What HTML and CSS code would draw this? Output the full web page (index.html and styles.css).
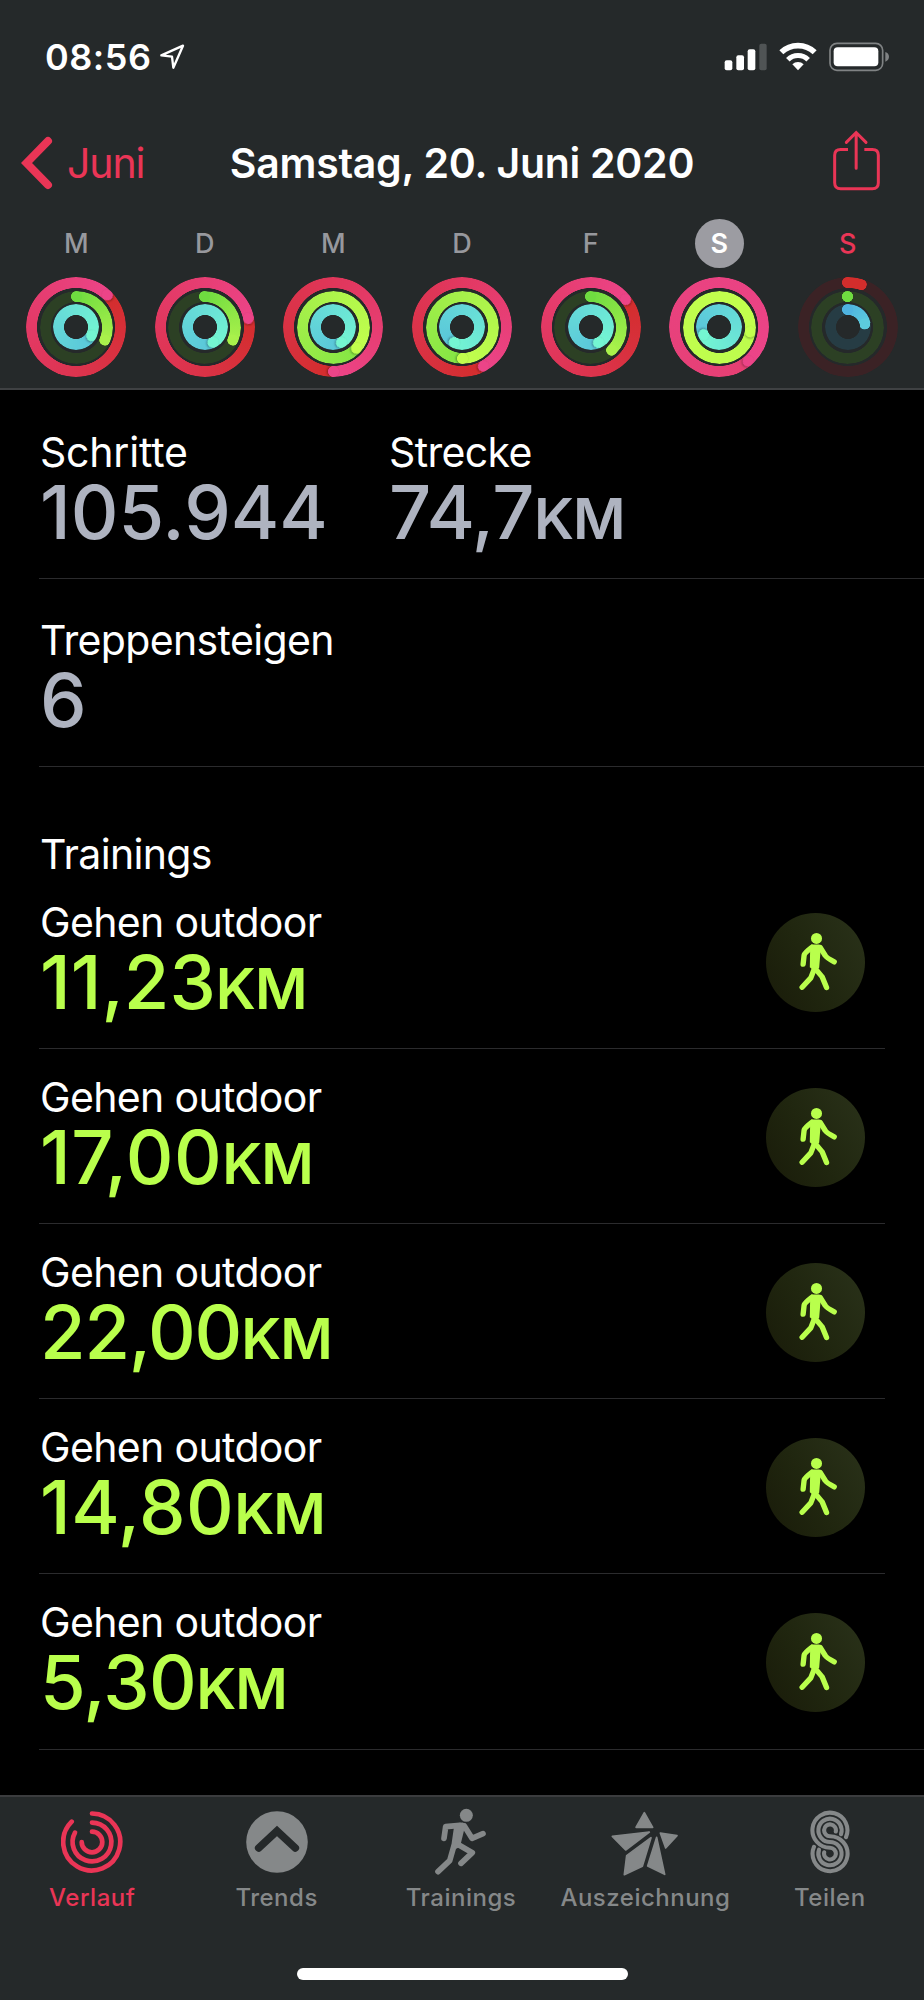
FILE: index.html
```html
<!DOCTYPE html>
<html lang="de">
<head>
    <meta charset="UTF-8">
    <meta name="viewport" content="width=device-width, initial-scale=1.0">
    <title>Aktivität</title>
    <link rel="stylesheet" href="styles.css">
</head>
<body>
    <!-- shared symbols -->
    <svg class="symbols" width="0" height="0">
        <symbol id="walker" viewBox="79 68 296 296">
            <circle cx="230" cy="144" r="16.500" fill="currentColor"/>
            <g fill="none" stroke="currentColor" stroke-width="16" stroke-linecap="round" stroke-linejoin="round">
                <path d="M190 221 L193 194 Q195 187 216 171"/>
                <path d="M241 171 L256 195 Q260 202 283 214"/>
                <path d="M229 238 L247 259 L260 291"/>
                <path d="M223 236 L213 262 L187 290"/>
            </g>
            <path d="M214 162 H239 Q244 165 243 172 L238 232 Q226 247 210 230 L211 172 Z" fill="currentColor"/>
        </symbol>
    </svg>

    <header class="header">
        <div class="status">
            <div class="status-left">
                <span class="time">08:56</span>
                <svg width="27" height="28" viewBox="479 128 81 84" fill="none" stroke="#fff" stroke-width="7" stroke-linejoin="round">
                    <path d="M486 165 L551 136 L522 202 L518 169 Z"/>
                </svg>
            </div>
            <svg class="status-icons" width="166" height="30" viewBox="785 125 498 90">
                <g fill="#fff">
                    <rect x="787" y="180" width="23" height="30" rx="6"/>
                    <rect x="822" y="165" width="23" height="45" rx="6"/>
                    <rect x="856" y="147" width="23" height="63" rx="6"/>
                    <rect x="891" y="130" width="22" height="80" rx="6" fill="#505455"/>
                    <path d="M1007 210 L990 192 A24 24 0 0 1 1024 192 Z"/>
                </g>
                <g fill="none" stroke="#fff">
                    <path d="M957 156 A72 72 0 0 1 1057 156" stroke-width="17"/>
                    <path d="M976.500 178 A43 43 0 0 1 1037.500 178" stroke-width="15"/>
                </g>
                <rect x="1103" y="129" width="158" height="81" rx="21" fill="none" stroke="#808384" stroke-width="5"/>
                <rect x="1114" y="141" width="134" height="57" rx="12" fill="#fff"/>
                <path d="M1269 155 Q1280 159 1280 169.500 Q1280 180 1269 184 Z" fill="#808384"/>
            </svg>
        </div>

        <nav class="nav">
            <a class="back">
                <svg width="32" height="54" viewBox="0 0 32 54" fill="none" stroke="#ea3556" stroke-width="8" stroke-linecap="round">
                    <path d="M27 5 L5.500 27 L27 49"/>
                </svg>
                <span>Juni</span>
            </a>
            <h1 class="title">Samstag, 20. Juni 2020</h1>
            <svg class="share" width="50" height="62" viewBox="1107 391 150 186" fill="none" stroke="#ea3556" stroke-width="9" stroke-linecap="round">
                <path d="M1158 449.500 H1136 Q1118 449.500 1118 467 V549 Q1118 567 1136 567 H1231 Q1249 567 1249 549 V467 Q1249 449.500 1231 449.500 H1207" stroke-linecap="butt"/>
                <path d="M1182.500 400 V506 M1153 428 L1182.500 398.500 L1212 428"/>
            </svg>
        </nav>

        <div class="week">
            <div class="day">
                <span class="day-name">M</span>
                <div class="rings">
                    <i class="ring move" style="--a: 44deg"></i>
                    <i class="ring exercise open" style="--a: 114deg"></i>
                    <i class="ring stand" style="--a: 120deg"></i>
                </div>
            </div>
            <div class="day">
                <span class="day-name">D</span>
                <div class="rings">
                    <i class="ring move" style="--a: 79deg"></i>
                    <i class="ring exercise open" style="--a: 114deg"></i>
                    <i class="ring stand" style="--a: 151deg"></i>
                </div>
            </div>
            <div class="day">
                <span class="day-name">M</span>
                <div class="rings">
                    <i class="ring move" style="--a: 180deg"></i>
                    <i class="ring exercise" style="--a: 132deg"></i>
                    <i class="ring stand" style="--a: 153deg"></i>
                </div>
            </div>
            <div class="day">
                <span class="day-name">D</span>
                <div class="rings">
                    <i class="ring move" style="--a: 152deg"></i>
                    <i class="ring exercise" style="--a: 180deg"></i>
                    <i class="ring stand" style="--a: 208deg"></i>
                </div>
            </div>
            <div class="day">
                <span class="day-name">F</span>
                <div class="rings">
                    <i class="ring move" style="--a: 52deg"></i>
                    <i class="ring exercise open" style="--a: 137deg"></i>
                    <i class="ring stand" style="--a: 153deg"></i>
                </div>
            </div>
            <div class="day selected">
                <span class="day-name">S</span>
                <div class="rings">
                    <i class="ring move" style="--a: 140deg"></i>
                    <i class="ring exercise" style="--a: 98deg"></i>
                    <i class="ring stand" style="--a: 244deg"></i>
                </div>
            </div>
            <div class="day today">
                <span class="day-name">S</span>
                <div class="rings">
                    <i class="ring move open" style="--a: 18deg"></i>
                    <i class="ring exercise open" style="--a: 0deg"></i>
                    <i class="ring stand open" style="--a: 80deg"></i>
                </div>
            </div>
        </div>
    </header>

    <main class="content">
        <section class="stats">
            <div class="stat">
                <div class="label loose">Schritte</div>
                <div class="value">105.944</div>
            </div>
            <div class="stat">
                <div class="label">Strecke</div>
                <div class="value snug">74,7<span class="unit">KM</span></div>
            </div>
        </section>
        <section class="stats">
            <div class="stat">
                <div class="label">Treppensteigen</div>
                <div class="value">6</div>
            </div>
        </section>

        <h2 class="label heading">Trainings</h2>
        <ul class="workouts">
            <li class="workout">
                <div>
                    <div class="label">Gehen outdoor</div>
                    <div class="value">11,23<span class="unit">KM</span></div>
                </div>
                <svg class="badge"><use href="#walker"/></svg>
            </li>
            <li class="workout">
                <div>
                    <div class="label">Gehen outdoor</div>
                    <div class="value wide">17,00<span class="unit">KM</span></div>
                </div>
                <svg class="badge"><use href="#walker"/></svg>
            </li>
            <li class="workout">
                <div>
                    <div class="label">Gehen outdoor</div>
                    <div class="value tight">22,00<span class="unit">KM</span></div>
                </div>
                <svg class="badge"><use href="#walker"/></svg>
            </li>
            <li class="workout">
                <div>
                    <div class="label">Gehen outdoor</div>
                    <div class="value wide">14,80<span class="unit">KM</span></div>
                </div>
                <svg class="badge"><use href="#walker"/></svg>
            </li>
            <li class="workout">
                <div>
                    <div class="label">Gehen outdoor</div>
                    <div class="value snug">5,30<span class="unit">KM</span></div>
                </div>
                <svg class="badge"><use href="#walker"/></svg>
            </li>
        </ul>
    </main>

    <footer class="tabbar">
        <div class="tabs">
            <a class="tab active">
                <svg width="62" height="70" viewBox="0 -4 62 70" fill="none" stroke="currentColor" stroke-width="4.700" stroke-linecap="round">
                    <path d="M31 2.500 A28.500 28.500 0 1 1 10.700 10.700"/>
                    <path d="M31 11.600 A19.400 19.400 0 1 1 14 21.600"/>
                    <path d="M31 20.700 A10.300 10.300 0 1 1 20.700 31"/>
                </svg>
                <span>Verlauf</span>
            </a>
            <a class="tab">
                <svg width="62" height="70" viewBox="0 -4 62 70">
                    <circle cx="31" cy="31" r="30.800" fill="currentColor"/>
                    <path d="M12.700 37 L31 20 L49.300 37" fill="none" stroke="#25292a" stroke-width="7.600" stroke-linecap="round"/>
                </svg>
                <span>Trends</span>
            </a>
            <a class="tab">
                <svg width="56" height="70" viewBox="24 21 168 210" fill="none" stroke="currentColor" stroke-width="17" stroke-linecap="round" stroke-linejoin="round">
                    <circle cx="124" cy="46" r="19.500" fill="currentColor" stroke="none"/>
                    <path d="M57 115 L62 80 L105 76"/>
                    <path d="M118 78 L141 115 L174 101"/>
                    <path d="M98 133 L142 158 L108 190"/>
                    <path d="M86 140 L74 182 L39 215"/>
                    <path d="M96 78 L112 76 L98 134 L87 140 Z" fill="currentColor"/>
                </svg>
                <span>Trainings</span>
            </a>
            <a class="tab">
                <svg width="70" height="70" viewBox="450 51 210 210" fill="currentColor" stroke="currentColor" stroke-width="5" stroke-linejoin="round">
                    <path d="M553 68 L578 112 L528 112 Z"/>
                    <path d="M457 139 L568 126 L497 180 Z"/>
                    <path d="M573 143 L547 229 L493 254 L500 197 Z"/>
                    <path d="M590 142 L614 253 L563 228 Z"/>
                    <path d="M601 129 L651 137 L617 174 Z"/>
                </svg>
                <span>Auszeichnung</span>
            </a>
            <a class="tab">
                <svg width="40" height="70" viewBox="0 -3.300 40 70" fill="none" stroke="currentColor" stroke-width="4.100" stroke-linecap="round">
                    <path d="M36 26.800 A17.500 17.500 0 1 0 20 37.400 A5.900 5.900 0 1 1 14.200 42"/>
                    <path d="M31 23.900 A11.650 11.650 0 1 0 20 31.650 A11.650 11.650 0 1 1 9 39.400"/>
                    <path d="M25.800 21.200 A5.900 5.900 0 1 0 20 25.900 A17.500 17.500 0 1 1 4 36.500"/>
                </svg>
                <span>Teilen</span>
            </a>
        </div>
        <div class="home-indicator"></div>
    </footer>
</body>
</html>
```
FILE: styles.css
```css
* {
    box-sizing: border-box;
}

body {
    margin: 0;
    width: 924px;
    height: 2000px;
    display: flex;
    flex-direction: column;
    background-color: #000;
    color: #fff;
    font-family: Inter, "Liberation Sans", sans-serif;
    overflow: hidden;
}

.symbols {
    display: none;
}

/* header */
.header {
    height: 390px;
    background-color: #25292a;
    border-bottom: 2px solid #3f4143;
}

.status {
    height: 113px;
    padding: 0 34px 0 45px;
    display: flex;
    justify-content: space-between;
    align-items: center;
}

.status-left {
    display: flex;
    align-items: center;
    gap: 8px;
}

.time {
    font-size: 36px;
    font-weight: 600;
    letter-spacing: 0.5px;
}

.nav {
    height: 100px;
    padding: 0 21px;
    display: grid;
    grid-template-columns: 180px 1fr 180px;
    align-items: center;
}

.back {
    display: flex;
    align-items: center;
    gap: 14px;
    color: #ea3556;
    font-size: 41px;
    letter-spacing: -1.1px;
}

.title {
    margin: 0;
    font-size: 41px;
    font-weight: 600;
    letter-spacing: -0.27px;
    text-align: center;
    white-space: nowrap;
}

.share {
    justify-self: end;
    margin: 0 22px 4px 0;
}

.week {
    padding: 6px 12px 0;
    display: flex;
}

.day {
    flex: 1;
    display: flex;
    flex-direction: column;
    align-items: center;
    gap: 9px;
}

.day-name {
    width: 49px;
    height: 49px;
    border-radius: 50%;
    font-size: 27px;
    font-weight: 500;
    line-height: 49px;
    text-align: center;
    color: #97989d;
}

.selected .day-name {
    background-color: #9c9ca2;
    color: #fff;
    font-weight: 600;
}

.today .day-name {
    color: #ea3556;
}

/* activity rings, --a is the angle of the ring's head */
.rings {
    display: grid;
    place-items: center;
    width: 100px;
    height: 100px;
}

.ring {
    grid-area: 1 / 1;
    position: relative;
    border-radius: 50%;
    background: conic-gradient(from var(--a), var(--tail), var(--mid), var(--head));
    -webkit-mask: radial-gradient(closest-side, transparent calc(100% - 11.3px), #000 calc(100% - 10.7px));
    mask: radial-gradient(closest-side, transparent calc(100% - 11.3px), #000 calc(100% - 10.7px));
}

.ring::before,
.ring::after {
    content: "";
    position: absolute;
    inset: 0;
    width: 11px;
    margin: 0 auto;
}

.ring::after {
    background: radial-gradient(circle at 50% 5.5px, var(--head) 5.2px, transparent 5.8px);
    transform: rotate(var(--a));
    filter: drop-shadow(1.5px 0 1px rgba(0, 0, 0, 0.35));
}

.ring.open {
    background: conic-gradient(var(--tail), var(--head) var(--a), var(--track) var(--a));
}

.ring.open::before {
    background: radial-gradient(circle at 50% 5.5px, var(--tail) 5.2px, transparent 5.8px);
}

.ring.open::after {
    filter: none;
}

.move {
    width: 100px;
    height: 100px;
    --tail: #d32d2c;
    --mid: #e0365a;
    --head: #ec4488;
    --track: #3b2225;
}

.exercise {
    width: 73px;
    height: 73px;
    --tail: #84e544;
    --mid: #a6f04a;
    --head: #c2ff4d;
    --track: #2c4024;
}

.exercise.open {
    --tail: #6fdc40;
    --head: #a9f14b;
}

.stand {
    width: 46px;
    height: 46px;
    --tail: #59c5da;
    --mid: #66dbd8;
    --head: #74f6d2;
    --track: #263c44;
}

.selected .move {
    --tail: #e53f72;
    --mid: #e94280;
}

.selected .exercise {
    --tail: #bdfc4d;
    --mid: #c0fe4d;
}

.today .move {
    --head: #d32d2c;
}

.today .exercise {
    --head: #6fdc40;
}

.today .stand {
    --tail: #4fb3e0;
    --head: #5ccbdd;
}

/* content */
.content {
    flex: 1;
}

.label {
    padding-left: 1px;
    font-size: 41px;
    font-weight: 400;
    line-height: 50px;
    letter-spacing: -0.65px;
}

.label.loose {
    letter-spacing: -0.2px;
}

.value {
    padding-left: 1px;
    color: #aeb3c0;
    font-size: 74px;
    font-weight: 500;
    line-height: 71px;
    white-space: nowrap;
}

.unit {
    font-size: 57px;
    font-weight: 600;
    letter-spacing: -1px;
    line-height: 1;
}

.snug {
    letter-spacing: -0.6px;
}

.tight {
    letter-spacing: -1.2px;
}

.wide {
    letter-spacing: 0.5px;
}

.stats {
    margin-left: 39px;
    padding: 36px 0 30px;
    display: grid;
    grid-template-columns: 349px 1fr;
    border-bottom: 1px solid #2b2b2d;
}

.stats:first-child {
    padding-top: 37px;
}

.heading {
    margin: 62px 0 0 39px;
}

.workouts {
    margin: 0;
    padding: 0 0 0 39px;
    list-style: none;
}

.workout {
    margin-right: 39px;
    padding: 23px 20px 30px 0;
    display: flex;
    justify-content: space-between;
    align-items: center;
    border-bottom: 1px solid #2b2b2d;
}

.workout:first-child {
    padding-top: 18px;
}

.workout:last-child {
    margin-right: 0;
    padding: 23px 59px 31px 0;
}

.workout .value {
    color: #b9ff4c;
}

.badge {
    width: 99px;
    height: 99px;
    margin-top: 9px;
    border-radius: 50%;
    background: linear-gradient(60deg, #191b09, #20260f 45%, #2a321a);
    color: #b9ff4c;
}

/* tab bar */
.tabbar {
    height: 205px;
    padding-top: 10px;
    display: flex;
    flex-direction: column;
    align-items: center;
    background-color: #25292a;
    border-top: 2px solid #3b3c3e;
}

.tabs {
    width: 100%;
    padding-right: 2px;
    display: flex;
}

.tab {
    flex: 1;
    display: flex;
    flex-direction: column;
    align-items: center;
    gap: 6px;
    color: #858889;
    font-size: 24px;
    font-weight: 500;
    line-height: 30px;
    letter-spacing: 0.5px;
}

.tab.active {
    color: #ea3556;
}

.home-indicator {
    width: 331px;
    height: 12px;
    margin-top: 55px;
    border-radius: 6px;
    background-color: #fff;
}
```
